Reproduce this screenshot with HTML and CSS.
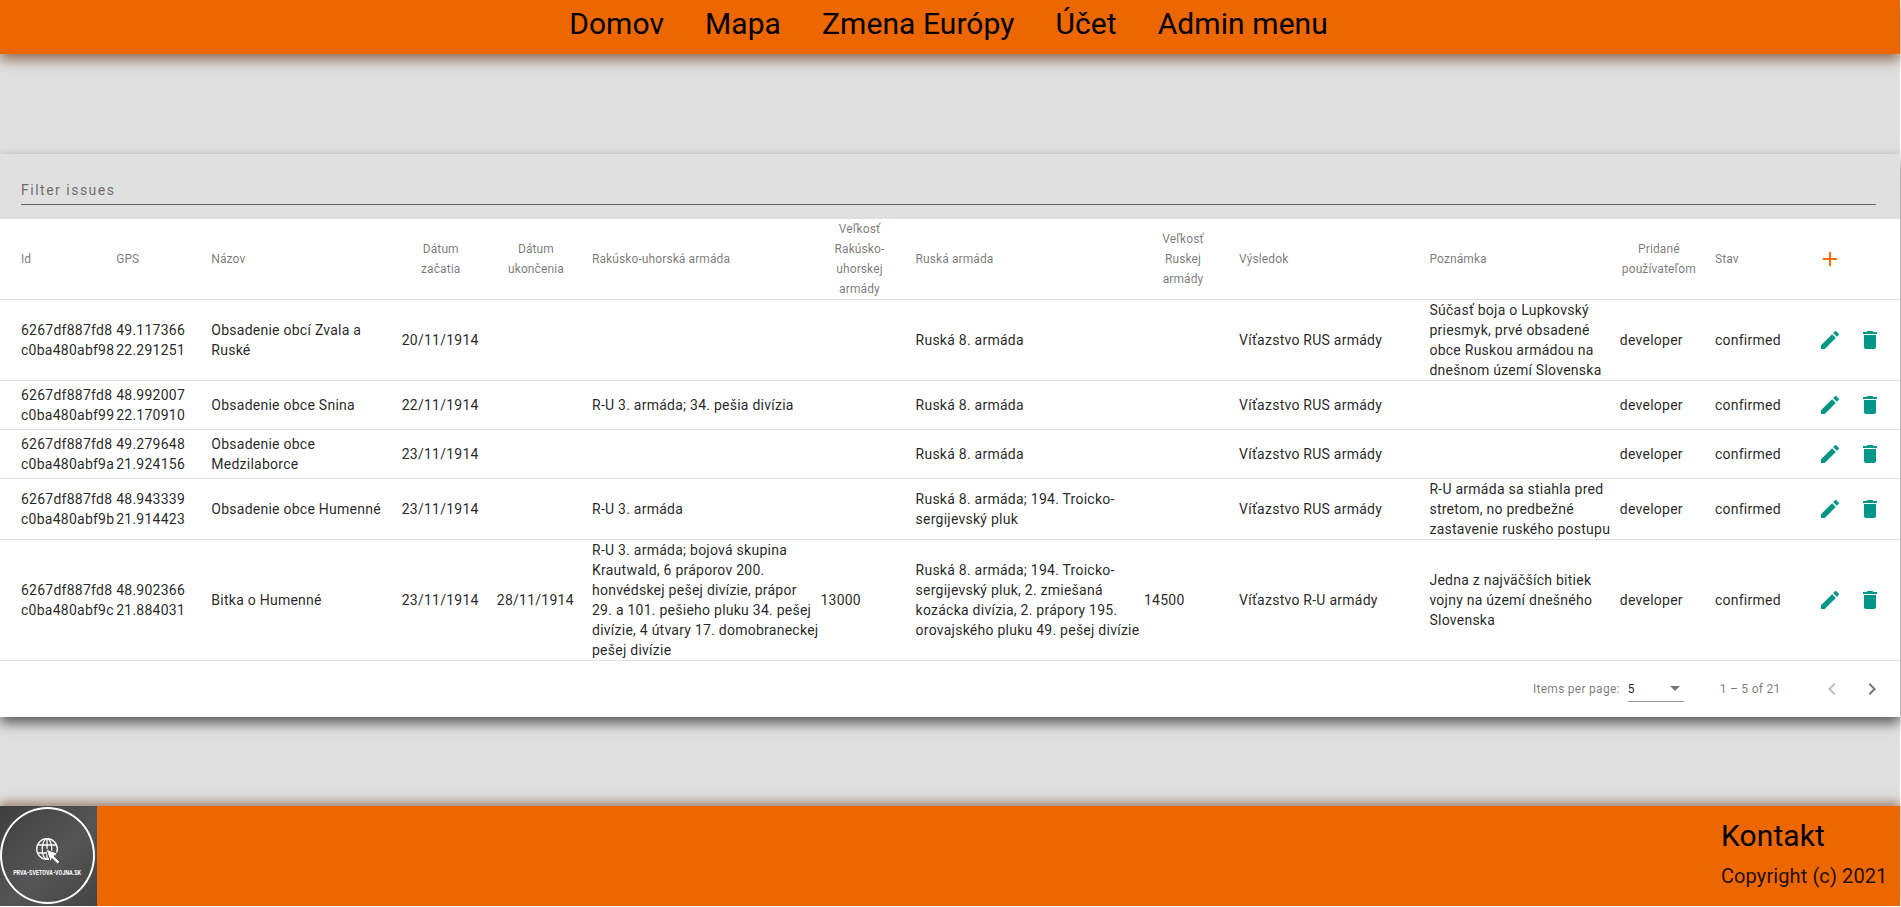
FILE: index.html
```html
<!DOCTYPE html>
<html lang="sk">
<head>
<meta charset="utf-8">
<title>Prvá svetová vojna</title>
<link rel="stylesheet" href="styles.css">
</head>
<body>
<div class="app">
  <header class="topbar">
    <nav class="nav">
      <a class="nav-link">Domov</a>
      <a class="nav-link">Mapa</a>
      <a class="nav-link">Zmena Európy</a>
      <a class="nav-link">Účet</a>
      <a class="nav-link">Admin menu</a>
    </nav>
  </header>
  <main class="content">
    <section class="card">
      <div class="filter"><div class="filter-field">Filter issues</div></div>
      <div class="row head">
        <div class="cell">Id</div>
        <div class="cell">GPS</div>
        <div class="cell">Názov</div>
        <div class="cell center">Dátum<br>začatia</div>
        <div class="cell center">Dátum<br>ukončenia</div>
        <div class="cell">Rakúsko-uhorská armáda</div>
        <div class="cell center">Veľkosť Rakúsko-uhorskej armády</div>
        <div class="cell">Ruská armáda</div>
        <div class="cell center">Veľkosť Ruskej armády</div>
        <div class="cell">Výsledok</div>
        <div class="cell">Poznámka</div>
        <div class="cell center">Pridané používateľom</div>
        <div class="cell">Stav</div>
        <div class="cell actions">
          <svg class="icon add" viewBox="0 0 24 24"><path d="M19 13h-6v6h-2v-6H5v-2h6V5h2v6h6v2z"/></svg>
        </div>
      </div>

      <div class="row">
        <div class="cell id">6267df887fd8c0ba480abf98</div>
        <div class="cell">49.117366 22.291251</div>
        <div class="cell">Obsadenie obcí Zvala a Ruské</div>
        <div class="cell">20/11/1914</div>
        <div class="cell"></div>
        <div class="cell"></div>
        <div class="cell"></div>
        <div class="cell">Ruská 8. armáda</div>
        <div class="cell"></div>
        <div class="cell">Víťazstvo RUS armády</div>
        <div class="cell">Súčasť boja o Lupkovský priesmyk, prvé obsadené obce Ruskou armádou na dnešnom území Slovenska</div>
        <div class="cell">developer</div>
        <div class="cell">confirmed</div>
        <div class="cell actions">
          <svg class="icon teal" viewBox="0 0 24 24"><path d="M3 17.25V21h3.75L17.81 9.94l-3.75-3.75L3 17.25zM20.71 7.04a1 1 0 0 0 0-1.41l-2.34-2.34a1 1 0 0 0-1.41 0l-1.83 1.83 3.75 3.75 1.83-1.83z"/></svg>
          <svg class="icon teal" viewBox="0 0 24 24"><path d="M6 19c0 1.1.9 2 2 2h8c1.1 0 2-.9 2-2V7H6v12zM19 4h-3.5l-1-1h-5l-1 1H5v2h14V4z"/></svg>
        </div>
      </div>

      <div class="row">
        <div class="cell id">6267df887fd8c0ba480abf99</div>
        <div class="cell">48.992007 22.170910</div>
        <div class="cell">Obsadenie obce Snina</div>
        <div class="cell">22/11/1914</div>
        <div class="cell"></div>
        <div class="cell">R-U 3. armáda; 34. pešia divízia</div>
        <div class="cell"></div>
        <div class="cell">Ruská 8. armáda</div>
        <div class="cell"></div>
        <div class="cell">Víťazstvo RUS armády</div>
        <div class="cell"></div>
        <div class="cell">developer</div>
        <div class="cell">confirmed</div>
        <div class="cell actions">
          <svg class="icon teal" viewBox="0 0 24 24"><path d="M3 17.25V21h3.75L17.81 9.94l-3.75-3.75L3 17.25zM20.71 7.04a1 1 0 0 0 0-1.41l-2.34-2.34a1 1 0 0 0-1.41 0l-1.83 1.83 3.75 3.75 1.83-1.83z"/></svg>
          <svg class="icon teal" viewBox="0 0 24 24"><path d="M6 19c0 1.1.9 2 2 2h8c1.1 0 2-.9 2-2V7H6v12zM19 4h-3.5l-1-1h-5l-1 1H5v2h14V4z"/></svg>
        </div>
      </div>

      <div class="row">
        <div class="cell id">6267df887fd8c0ba480abf9a</div>
        <div class="cell">49.279648 21.924156</div>
        <div class="cell">Obsadenie obce Medzilaborce</div>
        <div class="cell">23/11/1914</div>
        <div class="cell"></div>
        <div class="cell"></div>
        <div class="cell"></div>
        <div class="cell">Ruská 8. armáda</div>
        <div class="cell"></div>
        <div class="cell">Víťazstvo RUS armády</div>
        <div class="cell"></div>
        <div class="cell">developer</div>
        <div class="cell">confirmed</div>
        <div class="cell actions">
          <svg class="icon teal" viewBox="0 0 24 24"><path d="M3 17.25V21h3.75L17.81 9.94l-3.75-3.75L3 17.25zM20.71 7.04a1 1 0 0 0 0-1.41l-2.34-2.34a1 1 0 0 0-1.41 0l-1.83 1.83 3.75 3.75 1.83-1.83z"/></svg>
          <svg class="icon teal" viewBox="0 0 24 24"><path d="M6 19c0 1.1.9 2 2 2h8c1.1 0 2-.9 2-2V7H6v12zM19 4h-3.5l-1-1h-5l-1 1H5v2h14V4z"/></svg>
        </div>
      </div>

      <div class="row">
        <div class="cell id">6267df887fd8c0ba480abf9b</div>
        <div class="cell">48.943339 21.914423</div>
        <div class="cell">Obsadenie obce Humenné</div>
        <div class="cell">23/11/1914</div>
        <div class="cell"></div>
        <div class="cell">R-U 3. armáda</div>
        <div class="cell"></div>
        <div class="cell">Ruská 8. armáda; 194. Troicko-sergijevský pluk</div>
        <div class="cell"></div>
        <div class="cell">Víťazstvo RUS armády</div>
        <div class="cell">R-U armáda sa stiahla pred stretom, no predbežné zastavenie ruského postupu</div>
        <div class="cell">developer</div>
        <div class="cell">confirmed</div>
        <div class="cell actions">
          <svg class="icon teal" viewBox="0 0 24 24"><path d="M3 17.25V21h3.75L17.81 9.94l-3.75-3.75L3 17.25zM20.71 7.04a1 1 0 0 0 0-1.41l-2.34-2.34a1 1 0 0 0-1.41 0l-1.83 1.83 3.75 3.75 1.83-1.83z"/></svg>
          <svg class="icon teal" viewBox="0 0 24 24"><path d="M6 19c0 1.1.9 2 2 2h8c1.1 0 2-.9 2-2V7H6v12zM19 4h-3.5l-1-1h-5l-1 1H5v2h14V4z"/></svg>
        </div>
      </div>

      <div class="row">
        <div class="cell id">6267df887fd8c0ba480abf9c</div>
        <div class="cell">48.902366 21.884031</div>
        <div class="cell">Bitka o Humenné</div>
        <div class="cell">23/11/1914</div>
        <div class="cell">28/11/1914</div>
        <div class="cell">R-U 3. armáda; bojová skupina Krautwald, 6 práporov 200. honvédskej pešej divízie, prápor 29. a 101. pešieho pluku 34. pešej divízie, 4 útvary 17. domobraneckej pešej divízie</div>
        <div class="cell">13000</div>
        <div class="cell">Ruská 8. armáda; 194. Troicko-sergijevský pluk, 2. zmiešaná kozácka divízia, 2. prápory 195. orovajského pluku 49. pešej divízie</div>
        <div class="cell">14500</div>
        <div class="cell">Víťazstvo R-U armády</div>
        <div class="cell">Jedna z najväčších bitiek vojny na území dnešného Slovenska</div>
        <div class="cell">developer</div>
        <div class="cell">confirmed</div>
        <div class="cell actions">
          <svg class="icon teal" viewBox="0 0 24 24"><path d="M3 17.25V21h3.75L17.81 9.94l-3.75-3.75L3 17.25zM20.71 7.04a1 1 0 0 0 0-1.41l-2.34-2.34a1 1 0 0 0-1.41 0l-1.83 1.83 3.75 3.75 1.83-1.83z"/></svg>
          <svg class="icon teal" viewBox="0 0 24 24"><path d="M6 19c0 1.1.9 2 2 2h8c1.1 0 2-.9 2-2V7H6v12zM19 4h-3.5l-1-1h-5l-1 1H5v2h14V4z"/></svg>
        </div>
      </div>

      <div class="paginator">
        <span class="pg-label">Items per page:</span>
        <div class="pg-select"><span>5</span><i class="pg-caret"></i></div>
        <span class="pg-range">1 – 5 of 21</span>
        <svg class="icon pg-btn off" viewBox="0 0 24 24"><path d="M15.41 7.41L14 6l-6 6 6 6 1.41-1.41L10.83 12z"/></svg>
        <svg class="icon pg-btn" viewBox="0 0 24 24"><path d="M10 6L8.59 7.41 13.17 12l-4.58 4.58L10 18l6-6z"/></svg>
      </div>
    </section>
  </main>
  <footer class="footer">
    <div class="logo">
      <div class="logo-ring">
        <svg class="logo-globe" viewBox="0 0 30 30" fill="none" stroke="#fff" stroke-width="1.3">
          <circle cx="11" cy="11" r="10.3"/>
          <ellipse cx="11" cy="11" rx="4.8" ry="10.3"/>
          <path d="M1.500 7h19M1.500 15h19M11 1v20"/>
          <path d="M10 11L22 15.500 18 18 24 24 21.500 26 16 20.500 14.500 24z" fill="#fff" stroke="#474747" stroke-width="1"/>
        </svg>
        <span class="logo-text">PRVA-SVETOVA-VOJNA.SK</span>
      </div>
    </div>
    <div class="contact">
      <div class="contact-title">Kontakt</div>
      <div class="contact-copy">Copyright (c) 2021</div>
    </div>
  </footer>
</div>
</body>
</html>
```
FILE: styles.css
```css
* { box-sizing: border-box; }
html, body { margin: 0; padding: 0; background: #fff; }
body { font-family: Roboto, "Liberation Sans", sans-serif; color: rgba(0,0,0,.87); overflow: hidden; }

.app { width: 1900px; height: 906px; background: #e0e0e0; display: flex; flex-direction: column; }

.topbar { height: 54px; flex: none; background: #ec6700; display: flex; justify-content: center; position: relative; z-index: 2;
  box-shadow: 0 6px 12px rgba(96,36,0,.6); }
.nav { display: flex; gap: 41px; align-items: center; padding: 0 3px 6px 0; }
.nav-link { font-size: 30px; color: #000; line-height: 48px; letter-spacing: .07px; }

.content { flex: 1; padding-top: 100px; }
.card { background: #e0e0e0; height: 563px; display: flex; flex-direction: column;
  box-shadow: 0 6px 12px rgba(0,0,0,.6); }

.filter { height: 65px; flex: none; padding: 0 24px 14px 21px; display: flex; align-items: flex-end; }
.filter-field { width: 100%; height: 27px; border-bottom: 1px solid rgba(0,0,0,.55); font-size: 14px; letter-spacing: 1.5px; color: rgba(0,0,0,.55); line-height: 24px; }

.row { display: grid; grid-template-columns: 95.3fr 95.3fr 190.6fr 95.3fr 95.3fr 228.7fr 95.3fr 228.7fr 95.3fr 190.6fr 190.6fr 95.3fr 95.3fr 90fr;
  min-height: 49px; padding-left: 21px; background: #fff; border-bottom: 1px solid #e0e0e0; font-size: 14px; line-height: 20px; letter-spacing: .25px; align-items: center; }
.head { height: 81px; font-size: 12px; color: rgba(0,0,0,.54); letter-spacing: .1px; flex: none; }
.cell { min-width: 0; }
.center { text-align: center; padding-right: 17px; }
.id { overflow-wrap: anywhere; }
.actions { display: flex; gap: 16px; padding-left: 8px; align-items: center; }

.icon { width: 24px; height: 24px; display: block; flex: none; }
.teal { fill: #009688; }
.add { fill: #ff6d00; }

.paginator { flex: 1; background: #fff; display: flex; align-items: center; font-size: 12px; letter-spacing: .27px; color: rgba(0,0,0,.54); padding-left: 1533px; }
.pg-select { width: 56px; height: 26px; margin-left: 8px; border-bottom: 1px solid rgba(0,0,0,.42); display: flex; align-items: center; justify-content: space-between; padding-right: 4px; color: rgba(0,0,0,.87); }
.pg-caret { width: 0; height: 0; border-left: 5px solid transparent; border-right: 5px solid transparent; border-top: 5px solid rgba(0,0,0,.54); }
.pg-range { margin-left: 36px; width: 60px; white-space: nowrap; }
.pg-btn { fill: rgba(0,0,0,.54); }
.pg-btn.off { fill: rgba(0,0,0,.26); margin-left: 40px; }
.pg-btn + .pg-btn { margin-left: 16px; }

.footer { height: 100px; flex: none; background: #ec6700; display: flex; justify-content: space-between; position: relative; z-index: 2;
  box-shadow: 0 -4px 10px rgba(100,40,0,.5); }
.logo { width: 97px; background: linear-gradient(135deg, #3f3f3f, #555 55%, #444); padding: 1px 0 0 0; }
.logo-ring { width: 95px; height: 97px; border: 2px solid #fff; border-radius: 50%; display: flex; flex-direction: column; align-items: center; padding-top: 29px; }
.logo-globe { width: 30px; height: 30px; margin-left: 7px; }
.logo-text { font-family: Roboto, sans-serif; font-size: 7px; font-weight: 700; color: #fff; line-height: 8px; margin-top: 1px; white-space: nowrap; transform: scaleX(.77); }
.contact { width: 179px; padding-top: 8px; }
.contact-title { font-size: 30px; line-height: 44px; color: #000; letter-spacing: .1px; }
.contact-copy { font-size: 20px; line-height: 28px; margin-top: 4px; color: rgba(0,0,0,.87); letter-spacing: .1px; }
```
